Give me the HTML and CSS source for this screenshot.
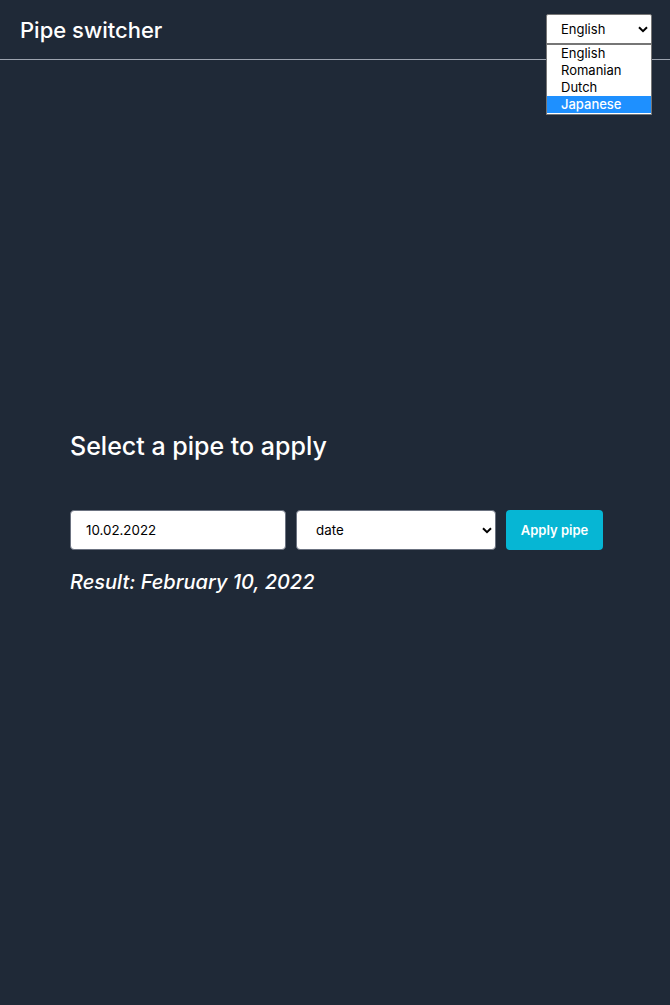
FILE: index.html
```html
<!DOCTYPE html>
<html lang="en">
<head>
<meta charset="utf-8">
<title>Pipe switcher</title>
<link rel="stylesheet" href="styles.css">
</head>
<body>
<header class="header">
  <h1 class="brand">Pipe switcher</h1>
  <div class="lang">
    <div class="lang-select">
      <span>English</span>
      <svg class="chev" width="10" height="7" viewBox="0 0 10 7"><path d="M1 1.2 L5 5.2 L9 1.2" fill="none" stroke="#000" stroke-width="2"/></svg>
    </div>
    <ul class="lang-list">
      <li>English</li>
      <li>Romanian</li>
      <li>Dutch</li>
      <li class="active">Japanese</li>
    </ul>
  </div>
</header>
<main class="main">
  <h2 class="title">Select a pipe to apply</h2>
  <div class="row">
    <div class="field input">10.02.2022</div>
    <div class="field select">
      <span>date</span>
      <svg class="chev" width="10" height="7" viewBox="0 0 10 7"><path d="M1 1.2 L5 5.2 L9 1.2" fill="none" stroke="#000" stroke-width="2"/></svg>
    </div>
    <button class="btn">Apply pipe</button>
  </div>
  <p class="result">Result: February 10, 2022</p>
</main>
</body>
</html>
```
FILE: styles.css
```css
* { box-sizing: border-box; }
html, body { margin: 0; padding: 0; }
body {
  background: #1f2937;
  color: #fff;
  font-family: Inter, "Noto Sans", sans-serif;
  min-height: 1005px;
}
.header {
  height: 60px;
  border-bottom: 1px solid #9ca3af;
  display: flex;
  align-items: center;
  justify-content: space-between;
  padding: 0 18px 0 20px;
  position: relative;
}
.brand {
  margin: 0;
  font-size: 22px;
  font-weight: 500;
  line-height: 1;
}
.lang {
  position: relative;
  width: 106px;
  margin-top: -1px;
}
.lang-select {
  height: 30px;
  background: #fff;
  border: 1px solid #767676;
  border-radius: 2px 2px 0 0;
  color: #000;
  font-size: 13px;
  display: flex;
  align-items: center;
  justify-content: space-between;
  padding: 0 3px 0 14px;
}
.lang-list {
  position: absolute;
  top: 30px;
  left: 0;
  width: 106px;
  margin: 0;
  padding: 0 0 1px;
  list-style: none;
  background: #fff;
  border: 1px solid #767676;
  color: #000;
  font-size: 13px;
  z-index: 2;
}
.lang-list li {
  height: 17px;
  line-height: 17px;
  padding-left: 14px;
}
.lang-list li.active {
  background: #1e90ff;
  color: #fff;
  font-weight: 500;
}
.main {
  padding: 369px 70px 0;
}
.title {
  margin: 0;
  font-size: 25px;
  font-weight: 500;
  line-height: 34px;
}
.row {
  display: flex;
  gap: 10px;
  margin-top: 47px;
}
.field {
  flex-shrink: 0;
  height: 40px;
  background: #fff;
  border: 1px solid #6b7280;
  border-radius: 4px;
  color: #000;
  font-size: 13.33px;
  display: flex;
  align-items: center;
}
.input {
  width: 216px;
  padding-left: 15px;
}
.select {
  width: 200px;
  padding: 0 3px 0 19px;
  justify-content: space-between;
}
.btn {
  flex-shrink: 0;
  height: 40px;
  width: 97px;
  background: #06b6d4;
  color: #fff;
  border: none;
  border-radius: 4px;
  font-family: Inter, "Noto Sans", sans-serif;
  font-size: 13px;
  font-weight: 600;
  padding: 0;
}
.result {
  margin: 19px 0 0;
  font-size: 20px;
  font-style: italic;
  font-weight: 500;
  line-height: 26px;
}
```
